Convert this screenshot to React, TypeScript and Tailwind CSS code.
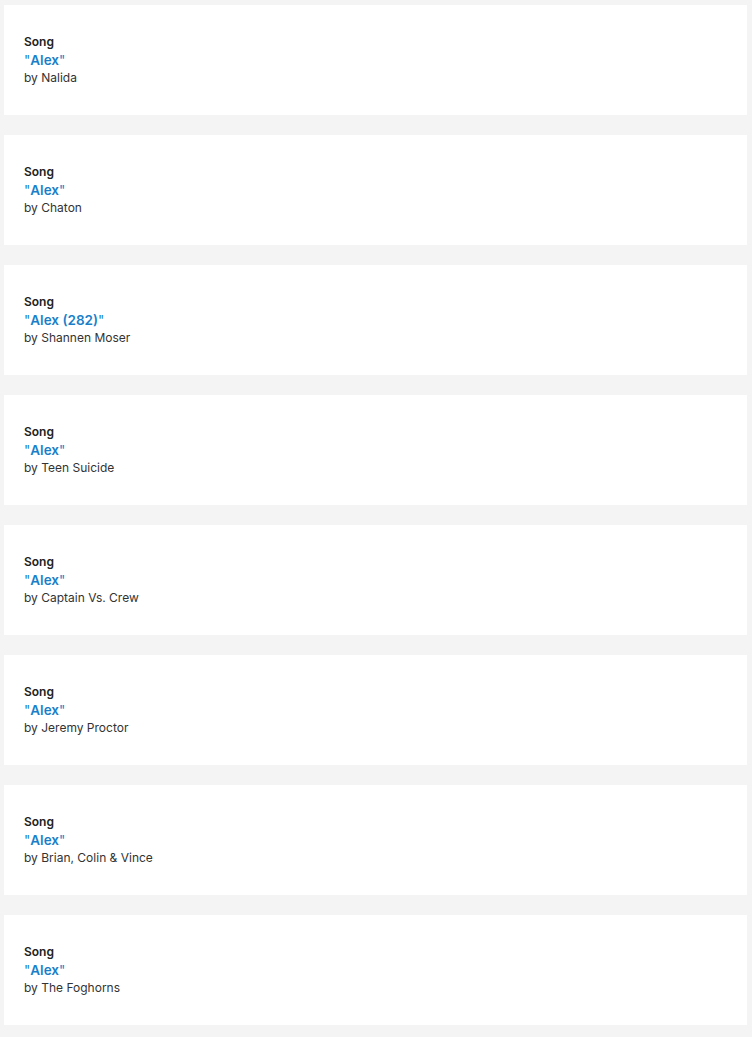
import React from 'react';

interface Song {
  title: string;
  artist: string;
}

const songs: Song[] = [
  { title: 'Alex', artist: 'Nalida' },
  { title: 'Alex', artist: 'Chaton' },
  { title: 'Alex (282)', artist: 'Shannen Moser' },
  { title: 'Alex', artist: 'Teen Suicide' },
  { title: 'Alex', artist: 'Captain Vs. Crew' },
  { title: 'Alex', artist: 'Jeremy Proctor' },
  { title: 'Alex', artist: 'Brian, Colin & Vince' },
  { title: 'Alex', artist: 'The Foghorns' },
];

const SongCard: React.FC<{ song: Song }> = ({ song }) => (
  <div className="bg-white h-[110px] px-5 pt-[28px]">
    <div className="text-[12px] leading-[18px] font-semibold text-[#222]">Song</div>
    <div className="text-[13.5px] leading-[18px] text-[#1a7fc9]">
      "<span className="font-semibold">{song.title}</span>"
    </div>
    <div className="text-[12px] leading-[18px] text-[#333]">by {song.artist}</div>
  </div>
);

export default function App() {
  return (
    <div
      className="min-h-[1037px] bg-[#f4f4f4] pl-1 pr-[5px] pt-[5px] pb-3 flex flex-col gap-5"
      style={{ fontFamily: 'Inter, "Noto Sans", sans-serif' }}
    >
      {songs.map((s, i) => (
        <SongCard key={i} song={s} />
      ))}
    </div>
  );
}
